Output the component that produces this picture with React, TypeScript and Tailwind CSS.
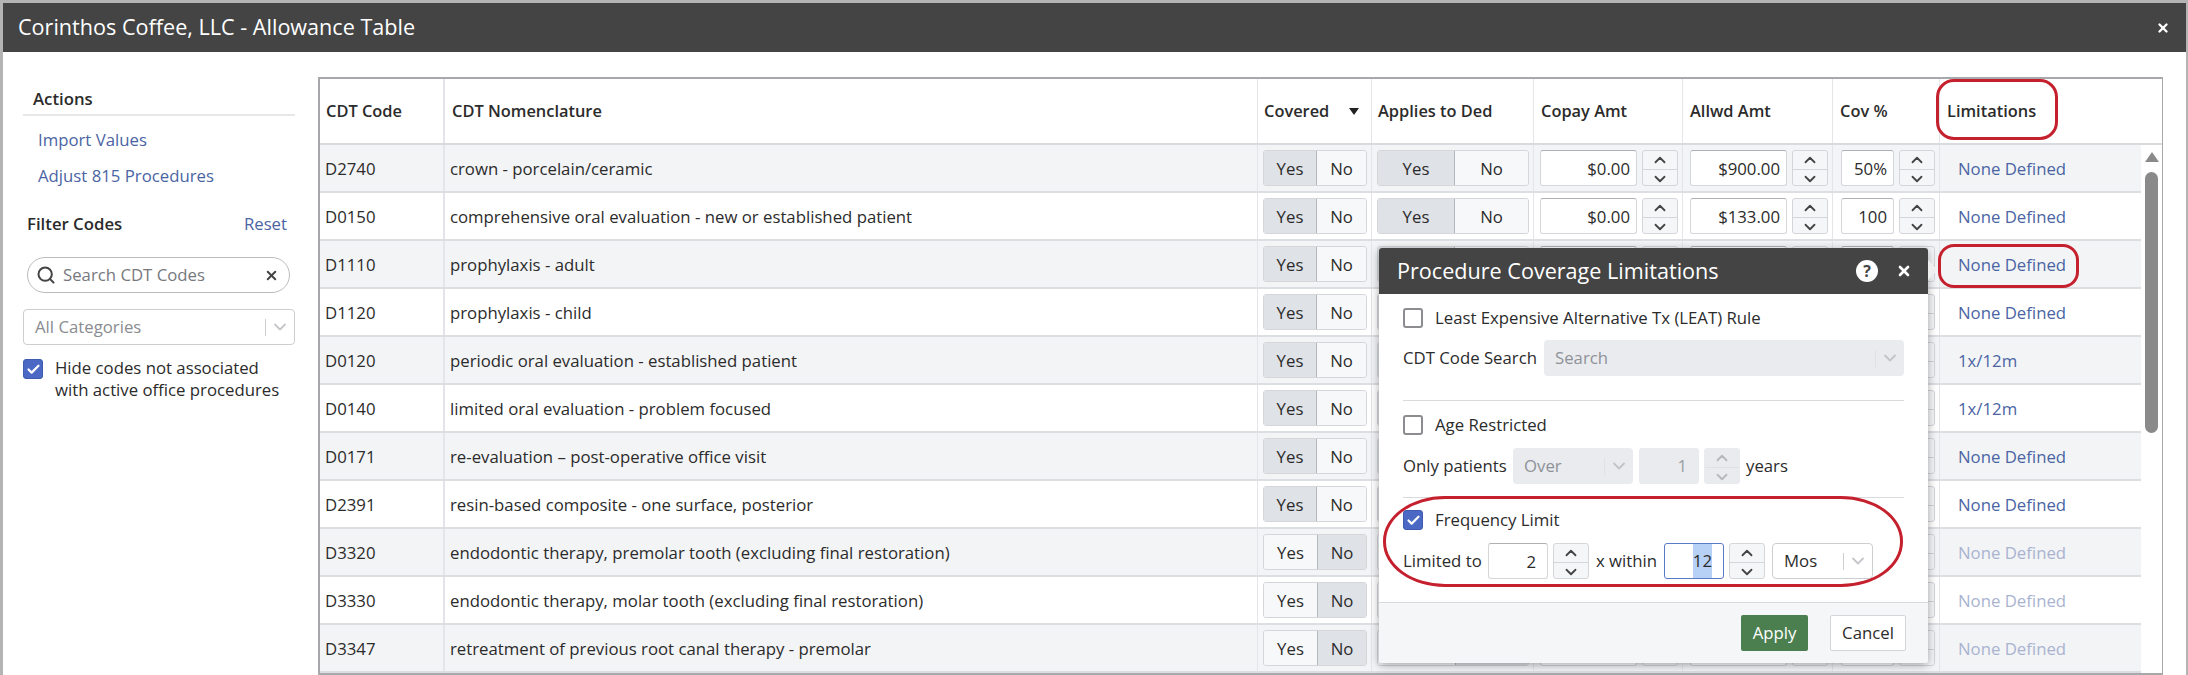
import React from 'react';
import { Check, ChevronDown, ChevronUp, Search, X } from 'lucide-react';

const rowGrid = 'grid grid-cols-[125px_813px_114px_162px_149px_150px_107px_201px]';

type Row = {
  code: string;
  name: string;
  covered: boolean;
  copay?: string;
  allowed?: string;
  cov?: string;
  limit: string;
  faded?: boolean;
};

// rows from D1110 down sit behind the popover, their amount cells can't be read
const rows: Row[] = [
  { code: 'D2740', name: 'crown - porcelain/ceramic', covered: true, copay: '$0.00', allowed: '$900.00', cov: '50%', limit: 'None Defined' },
  { code: 'D0150', name: 'comprehensive oral evaluation - new or established patient', covered: true, copay: '$0.00', allowed: '$133.00', cov: '100', limit: 'None Defined' },
  { code: 'D1110', name: 'prophylaxis - adult', covered: true, limit: 'None Defined' },
  { code: 'D1120', name: 'prophylaxis - child', covered: true, limit: 'None Defined' },
  { code: 'D0120', name: 'periodic oral evaluation - established patient', covered: true, limit: '1x/12m' },
  { code: 'D0140', name: 'limited oral evaluation - problem focused', covered: true, limit: '1x/12m' },
  { code: 'D0171', name: 're-evaluation – post-operative office visit', covered: true, limit: 'None Defined' },
  { code: 'D2391', name: 'resin-based composite - one surface, posterior', covered: true, limit: 'None Defined' },
  { code: 'D3320', name: 'endodontic therapy, premolar tooth (excluding final restoration)', covered: false, limit: 'None Defined', faded: true },
  { code: 'D3330', name: 'endodontic therapy, molar tooth (excluding final restoration)', covered: false, limit: 'None Defined', faded: true },
  { code: 'D3347', name: 'retreatment of previous root canal therapy - premolar', covered: false, limit: 'None Defined', faded: true },
];

const Spinner = ({ disabled }: { disabled?: boolean }) => (
  <div className={`flex flex-col w-[36px] h-[36px] shrink-0 rounded-[3px] border ${disabled ? 'bg-[#e9ebee] border-[#e9ebee] text-[#b5b8bd]' : 'bg-[#f5f6f8] border-[#d4d6da] text-[#444]'}`}>
    <div className={`flex-1 flex items-center justify-center border-b ${disabled ? 'border-[#dfe1e4]' : 'border-[#d4d6da]'}`}>
      <ChevronUp className="w-[18px] h-[18px]" strokeWidth={2.4} />
    </div>
    <div className="flex-1 flex items-center justify-center">
      <ChevronDown className="w-[18px] h-[18px]" strokeWidth={2.4} />
    </div>
  </div>
);

const NumberBox = ({ value, width }: { value?: string; width: string }) => (
  <div className={`${width} h-[36px] shrink-0 flex items-center justify-end pr-[6px] pt-[1px] bg-white rounded-[3px] border border-[#d4d6da] border-t-[#aeb0b4]`}>
    {value}
  </div>
);

const Toggle = ({ on, yesW, noW, blank }: { on: boolean; yesW: string; noW: string; blank?: boolean }) => (
  <div className="flex h-[36px] rounded-[3px] border border-[#d4d6da] overflow-hidden">
    <div className={`${yesW} flex items-center justify-center pt-[1px] ${on ? 'bg-[#dfe2e7] border-r border-[#b4b7bc]' : 'bg-[#f7f8fa]'}`}>{blank ? '' : 'Yes'}</div>
    <div className={`${noW} flex items-center justify-center pt-[1px] ${on ? 'bg-[#f7f8fa]' : 'bg-[#dfe2e7] border-l border-[#b4b7bc]'}`}>{blank ? '' : 'No'}</div>
  </div>
);

const Select = ({ label, className, disabled }: { label: string; className: string; disabled?: boolean }) => (
  <div className={`${className} h-[36px] flex items-center rounded-[4px] ${disabled ? 'bg-[#e9ebee] text-[#8f9298]' : 'bg-white border border-[#ccced2]'}`}>
    <span className="flex-1 pl-[11px] truncate">{label}</span>
    <span className={`w-px h-[17px] ${disabled ? 'bg-[#dfe1e4]' : 'bg-[#ccced2]'}`} />
    <ChevronDown className={`mx-[4px] w-[20px] h-[20px] ${disabled ? 'text-[#c2c4c8]' : 'text-[#c4c6ca]'}`} strokeWidth={2.2} />
  </div>
);

const CheckBox = ({ checked }: { checked?: boolean }) => (
  <div className={`w-[20px] h-[20px] shrink-0 rounded-[3px] flex items-center justify-center ${checked ? 'bg-[#4a68c4] border border-[#3f5bb0]' : 'bg-white border-2 border-[#8b8d91]'}`}>
    {checked && <Check className="w-[15px] h-[15px] text-white" strokeWidth={3.5} />}
  </div>
);

const TableRow = ({ row, index }: { row: Row; index: number }) => (
  <div className={`${rowGrid} h-[48px] border-b-2 border-[#dcdee1] ${index % 2 === 0 ? 'bg-[#f3f4f6]' : 'bg-white'}`}>
    <div className="flex items-center pl-[5px] pt-[1px] border-r-2 border-[#e4e5e8]">{row.code}</div>
    <div className="flex items-center pl-[5px] pt-[1px] border-r border-[#e4e5e8]">{row.name}</div>
    <div className="flex items-center pl-[5px] border-r border-[#e4e5e8]">
      <Toggle on={row.covered} yesW="w-[53px]" noW="w-[49px]" />
    </div>
    <div className="flex items-center pl-[5px] border-r border-[#e4e5e8]">
      <Toggle on={row.covered} yesW="w-[77px]" noW="w-[73px]" blank={!row.copay} />
    </div>
    <div className="flex items-center gap-[5px] pl-[6px] border-r border-[#e4e5e8]">
      <NumberBox value={row.copay} width="w-[97px]" />
      <Spinner />
    </div>
    <div className="flex items-center gap-[5px] pl-[7px] border-r border-[#e4e5e8]">
      <NumberBox value={row.allowed} width="w-[97px]" />
      <Spinner />
    </div>
    <div className="flex items-center gap-[5px] pl-[8px] border-r border-[#e4e5e8]">
      <NumberBox value={row.cov} width="w-[53px]" />
      <Spinner />
    </div>
    <div className={`flex items-center pl-[18px] pt-[1px] ${row.faded ? 'text-[#a9b3d0]' : 'text-[#4a64a3]'}`}>{row.limit}</div>
  </div>
);

const Popover = () => (
  <div className="absolute left-[1379px] top-[248px] w-[549px] h-[415px] flex flex-col rounded-[3px] bg-white shadow-[0_2px_10px_rgba(0,0,0,0.35)] text-[#2b2b2b]">
    <div className="absolute right-[-7px] top-[15px] w-[14px] h-[14px] rotate-45 bg-[#efeff0]" />
    <div className="relative h-[46px] shrink-0 flex items-center pl-[18px] pr-[16px] bg-[#444444] rounded-t-[3px] text-white">
      <span className="flex-1 text-[21.6px]">Procedure Coverage Limitations</span>
      <span className="w-[22px] h-[22px] rounded-full bg-white text-[#444] text-[16px] font-bold flex items-center justify-center mr-[18px]">?</span>
      <X className="w-[16px] h-[16px]" strokeWidth={4} />
    </div>
    <div className="relative flex-1 flex flex-col px-[24px]">
      <div className="flex items-center gap-[12px] mt-[14px] h-[20px]">
        <CheckBox />
        <span>Least Expensive Alternative Tx (LEAT) Rule</span>
      </div>
      <div className="flex items-center mt-[12px]">
        <span className="w-[141px] shrink-0">CDT Code Search</span>
        <Select label="Search" className="flex-1" disabled />
      </div>
      <div className="h-px bg-[#d9dadd] mt-[24px]" />
      <div className="flex items-center gap-[12px] mt-[14px] h-[20px]">
        <CheckBox />
        <span>Age Restricted</span>
      </div>
      <div className="flex items-center mt-[13px]">
        <span className="w-[110px] shrink-0">Only patients</span>
        <Select label="Over" className="w-[120px]" disabled />
        <div className="w-[60px] h-[36px] ml-[6px] flex items-center justify-end pr-[12px] rounded-[3px] bg-[#e9ebee] text-[#9a9da2]">1</div>
        <div className="ml-[5px]">
          <Spinner disabled />
        </div>
        <span className="ml-[6px]">years</span>
      </div>
      <div className="h-px bg-[#d9dadd] mt-[13px]" />
      <div className="flex items-center gap-[12px] mt-[12px] h-[20px]">
        <CheckBox checked />
        <span>Frequency Limit</span>
      </div>
      <div className="flex items-center mt-[13px]">
        <span className="w-[85px] shrink-0">Limited to</span>
        <NumberBox value="2" width="w-[60px] pr-[11px]" />
        <div className="ml-[5px]">
          <Spinner />
        </div>
        <span className="w-[75px] shrink-0 pl-[7px]">x within</span>
        <div className="w-[60px] h-[36px] shrink-0 flex items-center justify-end pr-[11px] rounded-[3px] border border-[#5a7ac8]">
          <span className="bg-[#b7d0f5] h-full flex items-center">12</span>
        </div>
        <div className="ml-[5px]">
          <Spinner />
        </div>
        <Select label="Mos" className="w-[101px] ml-[7px]" />
      </div>
    </div>
    <div className="h-[61px] shrink-0 flex items-center justify-end gap-[22px] pr-[22px] bg-[#f5f6f8] border-t border-[#d9dadd] rounded-b-[3px]">
      <div className="w-[67px] h-[36px] flex items-center justify-center rounded-[2px] bg-[#4c7f50] text-white">Apply</div>
      <div className="w-[76px] h-[36px] flex items-center justify-center rounded-[2px] bg-white border border-[#d4d6da]">Cancel</div>
    </div>
  </div>
);

export default function App() {
  return (
    <div className="relative h-[675px] w-[2188px] overflow-hidden bg-white border-l-[3px] border-r-[2px] border-t-[3px] border-[#b4b4b4] font-['Open_Sans',sans-serif] text-[16.75px] text-[#2b2b2b]">
      {/* Title bar */}
      <div className="h-[49px] flex items-center justify-between pl-[15px] pr-[16px] bg-[#444444] text-white">
        <span className="text-[21.6px]">Corinthos Coffee, LLC - Allowance Table</span>
        <X className="w-[14px] h-[14px]" strokeWidth={4} />
      </div>

      <div className="flex">
        {/* Filter sidebar */}
        <aside className="w-[315px] shrink-0 pl-[20px] pr-[23px] pt-[36px]">
          <div className="pl-[10px] pb-[4px] font-semibold border-b-2 border-[#e6e7e9] leading-[22px]">Actions</div>
          <div className="pl-[15px] pt-[13px] text-[#4a64a3] leading-[22px]">Import Values</div>
          <div className="pl-[15px] pt-[14px] text-[#4a64a3] leading-[22px]">Adjust 815 Procedures</div>
          <div className="flex justify-between items-center pl-[4px] pr-[8px] pt-[26px] leading-[22px]">
            <span className="font-semibold">Filter Codes</span>
            <span className="text-[#4a64a3]">Reset</span>
          </div>
          <div className="flex items-center ml-[4px] mr-[5px] mt-[22px] h-[36px] rounded-full border border-[#b9bbbe] pl-[8px] pr-[10px]">
            <Search className="w-[20px] h-[20px] text-[#444]" strokeWidth={2.4} />
            <span className="flex-1 pl-[7px] text-[#77797d]">Search CDT Codes</span>
            <X className="w-[15px] h-[15px] text-[#444]" strokeWidth={3.2} />
          </div>
          <Select label="All Categories" className="mt-[16px] text-[#8a8c90]" />
          <div className="flex gap-[12px] mt-[14px] leading-[22px]">
            <CheckBox checked />
            <span className="-mt-[2px]">
              Hide codes not associated
              <br />
              with active office procedures
            </span>
          </div>
        </aside>

        {/* Allowance table */}
        <div className="mt-[25px] w-[1845px] h-[598px] shrink-0 flex flex-col border-l-2 border-t-2 border-r border-b-2 border-[#a6a8ab]">
          <div className="grid grid-cols-[125px_813px_114px_162px_149px_150px_107px_223px] h-[66px] shrink-0 border-b-2 border-[#d9dadd] font-semibold text-[16.4px]">
            <div className="flex items-center pl-[6px] border-r-2 border-[#e4e5e8]">CDT Code</div>
            <div className="flex items-center pl-[7px] border-r border-[#e4e5e8]">CDT Nomenclature</div>
            <div className="flex items-center pl-[6px] border-r border-[#e4e5e8]">
              <span className="flex-1">Covered</span>
              <svg className="w-[10px] h-[7px] mr-[12px]" viewBox="0 0 10 7">
                <polygon points="0,0 10,0 5,7" fill="#222" />
              </svg>
            </div>
            <div className="flex items-center pl-[6px] border-r border-[#e4e5e8]">Applies to Ded</div>
            <div className="flex items-center pl-[7px] border-r border-[#e4e5e8]">Copay Amt</div>
            <div className="flex items-center pl-[7px] border-r border-[#e4e5e8]">Allwd Amt</div>
            <div className="flex items-center pl-[7px] border-r border-[#e4e5e8]">Cov %</div>
            <div className="flex items-center pl-[7px]">Limitations</div>
          </div>
          <div className="flex flex-1 min-h-0">
            <div className="w-[1821px] shrink-0 overflow-hidden">
              {rows.map((row, i) => (
                <TableRow key={row.code} row={row} index={i} />
              ))}
            </div>
            <div className="flex-1 flex flex-col items-center pt-[7px]">
              <svg className="w-[14px] h-[10px]" viewBox="0 0 14 10">
                <polygon points="7,0 14,10 0,10" fill="#8a8a8a" />
              </svg>
              <div className="w-[13px] h-[261px] mt-[10px] rounded-full bg-[#8a8a8a]" />
            </div>
          </div>
        </div>
      </div>

      {/* Overlays: coordinates are relative to the window corner */}
      <div className="absolute left-[-3px] top-[-3px] w-0 h-0">
        <Popover />
        <div className="absolute left-[1936px] top-[79px] w-[122px] h-[61px] rounded-[18px] border-[3px] border-[#c5202e]" />
        <div className="absolute left-[1938px] top-[244px] w-[141px] h-[44px] rounded-[16px] border-[3px] border-[#c5202e]" />
        <div className="absolute left-[1383px] top-[496px] w-[520px] h-[91px] rounded-[62px/45px] border-[3px] border-[#c5202e]" />
      </div>
    </div>
  );
}
